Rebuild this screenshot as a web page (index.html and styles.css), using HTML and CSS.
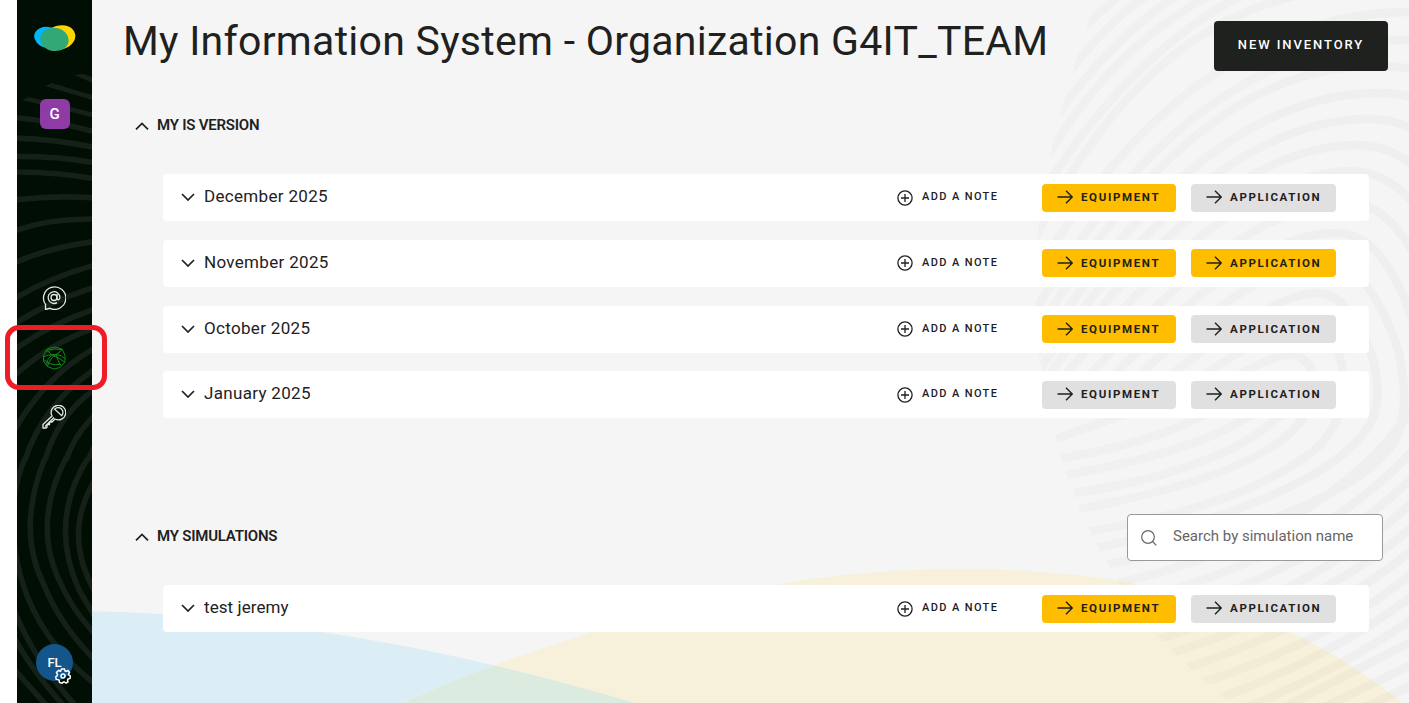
FILE: index.html
```html
<!DOCTYPE html>
<html lang="en">
<head>
<meta charset="utf-8">
<title>My Information System</title>
<link rel="stylesheet" href="styles.css">
</head>
<body>
<svg class="symbols" aria-hidden="true">
  <symbol id="plus" viewBox="0 0 16 16"><circle cx="8" cy="8" r="7.1"/><path d="M8 4v8M4 8h8"/></symbol>
  <symbol id="arrow" viewBox="0 0 16 14"><path d="M.5 7h15M9 .8L15.2 7L9 13.2"/></symbol>
  <symbol id="down" viewBox="0 0 14 8"><path d="M1 1l6 6l6-6"/></symbol>
  <symbol id="up" viewBox="0 0 14 8"><path d="M1 7.4l6-6l6 6"/></symbol>
</svg>
<div class="app">
  <aside class="sidebar">
    <svg class="sidebar-lines" viewBox="17 0 75 703">
      <path d="M74 75L83 74L95 78V84ZM45 86L52 83L95 96V101ZM22 100L29 97L95 113V118Z" class="tip"/>
      <path d="M14 117.500Q60 122 95 132M14 138Q55 139 95 147.500M14 156.500Q60 156 95 163M14 172Q60 172 95 179M14 200Q55 195 95 198M14 231Q50 218 95 219M14 263Q50 247 95 241.500M14 299Q50 277 95 265M14 324Q50 301 95 287M14 350Q50 324 95 309M14 376Q50 343 95 328M14 431Q45 376 95 348M25 460Q43 404 95 369M45 460Q58 415 95 389M66 460Q75 434 95 415M88 460L95 445"/>
      <path d="M25 458Q2 513 22 581Q40 641 95 684M45 458Q16 530 44 585Q60 625 95 660M66 458Q33 521 58 578Q72 610 95 634M88 458Q48 521 79 590L95 617M95 480Q62 534 95 592M14 610Q34 660 75 705M14 637Q30 668 63 705M14 669L46 705"/>
    </svg>
    <svg class="logo" viewBox="0 0 42 28"><ellipse cx="14" cy="13.500" rx="14" ry="10.500" fill="#00b5fa" transform="rotate(12 14 13.500)"/><ellipse cx="26" cy="13.500" rx="15.500" ry="12" fill="#ffd500" transform="rotate(-14 26 13.500)"/><ellipse cx="20.500" cy="15.500" rx="14.200" ry="11.500" fill="#31a875" transform="rotate(8 20.500 15.500)"/></svg>
    <span class="workspace">G</span>
    <nav class="nav">
      <svg viewBox="0 0 24 24"><path d="M4 19.200A11.200 11.200 0 1 1 8 22.300L3.500 23.500V18.700"/><circle cx="12" cy="11.500" r="3"/><path d="M15 8v5.500q2.600 1 2.900-2.200a5.900 5.900 0 1 0-2.800 5.300"/></svg>
      <svg class="active" viewBox="0 0 24 24"><path d="M7 2.300L13 1L20 3L23 9.500V16L18 21.500L12 23L5.500 20.500L1.500 15V10L4 4.500Z"/><path d="M4 4.500Q12 2 20 3.500M1 11.500Q5 8.500 14 8.500Q19 6 20 3M4 4.500Q7 5 9.500 9Q4 14 4.500 19.500M14 8.500Q9 11 5.500 20M14 8.500Q16 15 18.500 19.500M9.500 9Q18 12 22.500 16M1 13Q8 20 19 18.500M14 8.500Q20 9 23 13"/></svg>
      <svg viewBox="0 0 24 24"><path d="M10 11a7.300 7.300 0 1 1 3 3L10 17H7.500v2.500H5v2.700L4 23H1v-3.500ZM12 12.500L3 21.500"/><path d="M12.700 4.200a4.500 4.500 0 1 1 7 6.500Z"/></svg>
    </nav>
    <div class="user">FL
      <svg class="gear" viewBox="0 0 16 16"><path d="M6.500 1h3l.5 2 1 .5 2-1 1.500 2-1 1.700.5 1 1.500.8-.5 2.500-2 .5-.5 1 .5 1.800-2 1.200-1.500-1-1 .1L7 15.200l-2.500-.7-.3-2-1-.9-2-.2L.8 8.800l1.500-1.300.2-1.200L1.500 4.500 3.500 2.500l2 .8Z"/><circle cx="8" cy="8" r="2"/></svg>
    </div>
  </aside>
  <main class="main">
    <svg class="backdrop" viewBox="92 0 1317 703">
      <defs>
        <clipPath id="fade"><path d="M1095 0L1076 60L1064 100L1053 145L1038 230L1035 300L1039 355L1051 420L1065 470L1080 510L1097 545L1119 582L1165 645L1190 668L1230 703H1409V0Z"/></clipPath>
        <path id="blue-hill" d="M92 611.500Q230 613 410 647Q520 669 635 703H92Z"/>
        <path id="yellow-hill" d="M403 703Q560 631 775 585Q860 569 960 569Q1060 569 1142 585Q1220 600 1290 632Q1350 661 1403 703Z"/>
        <clipPath id="in-blue"><use href="#blue-hill"/></clipPath>
      </defs>
      <use href="#blue-hill" fill="#dceef5"/>
      <use href="#yellow-hill" fill="#f7f1dc"/>
      <g clip-path="url(#in-blue)"><use href="#yellow-hill" fill="#dcebe0"/></g>
      <g class="rings" clip-path="url(#fade)">
        <path d="M1085 26L1118-4M1068 73Q1110 20 1146-4M1055 118Q1110 40 1176-4M1045 160Q1110 50 1208-4M1030 213Q1120 60 1240-4"/>
        <path d="M1030 248Q1140 20 1315-8M1030 283Q1190 12 1412 12M1030 320Q1190 38 1412 40M1030 345Q1190 65 1375 66Q1395 66 1412 69M1030 365Q1200 92 1380 93Q1397 93 1412 97"/>
        <path d="M1030 384Q1205 118 1370 119Q1393 119 1412 129M1030 401Q1210 143 1360 145Q1388 146 1412 164M1037 412Q1220 170 1355 171Q1385 173 1412 201M1058 412Q1235 200 1350 202Q1384 204 1412 250"/>
        <path d="M1080 412Q1240 232 1338 233Q1385 234 1414 325M1102 412Q1250 260 1325 263Q1370 264 1398 350Q1410 400 1398 435Q1360 510 1106 565"/>
        <path d="M1126 412Q1265 293 1317 293Q1348 293 1370 350Q1385 395 1370 425Q1320 500 1096 548M1152 412Q1270 325 1307 325Q1332 325 1342 365Q1350 415 1318 447Q1250 505 1085 532M1180 412Q1270 350 1295 355Q1325 365 1305 415Q1270 475 1068 511M1283 412Q1230 470 1062 495M1255 412Q1200 452 1055 477M1210 412Q1150 445 1050 460M1130 412L1045 443"/>
        <path d="M1110 585Q1330 535 1415 405M1120 604Q1320 555 1415 448M1135 624Q1320 570 1415 475M1150 642Q1320 590 1415 500M1160 657Q1320 607 1415 525M1175 672Q1320 625 1415 548M1195 685Q1330 642 1415 571M1215 700Q1330 658 1415 594M1240 710Q1340 670 1415 617M1275 712L1415 640M1310 714L1415 663M1350 714L1415 684"/>
      </g>
    </svg>
    <header class="header">
      <h1>My Information System - Organization G4IT_TEAM</h1>
      <button class="primary">NEW INVENTORY</button>
    </header>
    <section class="versions">
      <h2><svg class="chev"><use href="#up"/></svg><span>MY IS VERSION</span></h2>
      <div class="rows">
        <article class="row"><svg class="chev"><use href="#down"/></svg><span class="name">December 2025</span><span class="note"><svg><use href="#plus"/></svg>ADD A NOTE</span><span class="btn on"><svg><use href="#arrow"/></svg>EQUIPMENT</span><span class="btn app-btn"><svg><use href="#arrow"/></svg>APPLICATION</span></article>
        <article class="row"><svg class="chev"><use href="#down"/></svg><span class="name">November 2025</span><span class="note"><svg><use href="#plus"/></svg>ADD A NOTE</span><span class="btn on"><svg><use href="#arrow"/></svg>EQUIPMENT</span><span class="btn on app-btn"><svg><use href="#arrow"/></svg>APPLICATION</span></article>
        <article class="row"><svg class="chev"><use href="#down"/></svg><span class="name">October 2025</span><span class="note"><svg><use href="#plus"/></svg>ADD A NOTE</span><span class="btn on"><svg><use href="#arrow"/></svg>EQUIPMENT</span><span class="btn app-btn"><svg><use href="#arrow"/></svg>APPLICATION</span></article>
        <article class="row"><svg class="chev"><use href="#down"/></svg><span class="name">January 2025</span><span class="note"><svg><use href="#plus"/></svg>ADD A NOTE</span><span class="btn"><svg><use href="#arrow"/></svg>EQUIPMENT</span><span class="btn app-btn"><svg><use href="#arrow"/></svg>APPLICATION</span></article>
      </div>
    </section>
    <section class="simulations">
      <div class="sim-head">
        <h2><svg class="chev"><use href="#up"/></svg><span>MY SIMULATIONS</span></h2>
        <label class="search"><svg viewBox="0 0 16 16"><circle cx="7" cy="7" r="6.300"/><path d="M11.500 11.500L15.400 15.400"/></svg><span>Search by simulation name</span></label>
      </div>
      <div class="rows">
        <article class="row"><svg class="chev"><use href="#down"/></svg><span class="name tight">test jeremy</span><span class="note"><svg><use href="#plus"/></svg>ADD A NOTE</span><span class="btn on"><svg><use href="#arrow"/></svg>EQUIPMENT</span><span class="btn app-btn"><svg><use href="#arrow"/></svg>APPLICATION</span></article>
      </div>
    </section>
  </main>
  <div class="highlight"></div>
</div>
</body>
</html>
```
FILE: styles.css
```css
* { box-sizing: border-box; }
body { margin: 0; background: #fff; color: #1e211e; font-family: Roboto, "Liberation Sans", sans-serif; overflow: hidden; }
svg { fill: none; stroke: currentColor; display: block; flex: none; }
.symbols { position: absolute; width: 0; height: 0; }
.app { position: relative; display: flex; height: 703px; padding-left: 17px; }

.sidebar { position: relative; width: 75px; background: #010e03; display: flex; flex-direction: column; align-items: center; color: #fff; overflow: hidden; }
.sidebar > * { position: relative; }
.sidebar .sidebar-lines { position: absolute; inset: 0; width: 75px; height: 703px; stroke: #142018; stroke-width: 5.600; }
.sidebar-lines .tip { fill: #142018; stroke: none; }
.logo { width: 42px; height: 28px; margin-top: 24px; stroke: none; }
.workspace { width: 30px; height: 30px; margin-top: 47px; border-radius: 6px; background: #8e3ba6; display: flex; align-items: center; justify-content: center; font-size: 15px; font-weight: 500; }
.nav { display: flex; flex-direction: column; gap: 35.500px; margin-top: 157px; margin-right: 1px; }
.nav svg { width: 24px; height: 24px; stroke: #e6e9e6; stroke-width: 1.300; }
.nav svg.active { stroke: #128a17; stroke-width: 1; }
.user { width: 37px; height: 37px; margin-top: 215px; border-radius: 50%; background: #14568b; display: flex; align-items: center; justify-content: center; font-size: 13px; font-weight: 500; line-height: 35px; }
.gear { position: absolute; left: 19px; top: 24px; width: 16px; height: 16px; stroke: #fff; stroke-width: 1.500; }

.main { position: relative; flex: 1; background: #f5f5f5; padding: 21px 21px 0 31px; }
.main > * { position: relative; }
.main .backdrop { position: absolute; inset: 0; width: 1317px; height: 703px; stroke: none; }
.rings { stroke: #000; opacity: .018; stroke-width: 8.500; }
.header { display: flex; justify-content: space-between; height: 50px; }
h1 { margin: 0; font-size: 41px; line-height: 41px; font-weight: 400; letter-spacing: .27px; white-space: nowrap; }
.primary { width: 174px; height: 50px; padding: 0 0 3px; border: 0; border-radius: 4px; background: #1e211e; color: #fff; font: 500 13px Roboto, sans-serif; letter-spacing: 1.920px; }
h2 { display: flex; align-items: center; gap: 8px; margin: 0; padding-left: 12px; height: 30px; font-size: 15px; font-weight: 600; letter-spacing: -.22px; }
h2 .chev { position: relative; top: 1px; }
.chev { width: 14px; height: 8px; stroke-width: 1.700; }
.versions { padding-top: 39px; }
.versions .rows { padding-top: 34px; }
.rows { display: flex; flex-direction: column; gap: 18.800px; padding: 24px 19px 0 40px; }
.row { display: flex; align-items: center; height: 47px; padding: 0 33px 0 18px; background: #fff; border-radius: 4px; }
.row .chev { margin-bottom: 1px; }
.name { margin-left: 9px; flex: 1; font-size: 17px; line-height: 45px; height: 47px; letter-spacing: .32px; }
.name.tight { letter-spacing: .08px; }
.note { display: flex; align-items: center; width: 145px; gap: 9px; padding-bottom: 1px; font-size: 11px; font-weight: 500; letter-spacing: 1.380px; line-height: 12px; }
.note svg { width: 16px; height: 16px; stroke-width: 1.300; position: relative; top: .5px; }
.btn { display: flex; align-items: center; width: 134px; height: 28px; gap: 8px; padding: 0 0 1px 15px; border-radius: 4px; background: #e0e0e0; font-size: 11.500px; font-weight: 700; letter-spacing: 1.650px; }
.btn svg { width: 16px; height: 14px; stroke-width: 1.400; }
.on { background: #ffbd00; }
.app-btn { width: 145px; margin-left: 15px; }
.simulations { padding-top: 96px; }
.sim-head { display: flex; justify-content: space-between; align-items: center; height: 47px; padding-right: 5px; }
.sim-head h2 { padding-bottom: 3px; }
.search { display: flex; align-items: center; width: 256px; height: 47px; padding-left: 13px; gap: 16px; border: 1px solid #999; border-radius: 4px; background: #fff; color: #666; font-size: 15px; letter-spacing: 0; }
.search svg { width: 16px; height: 16px; stroke-width: 1.200; }
.search span { padding-bottom: 3px; }
.highlight { position: absolute; left: 5px; top: 325px; width: 102px; height: 65px; border: 5px solid #ee1c25; border-radius: 14px; }
```
